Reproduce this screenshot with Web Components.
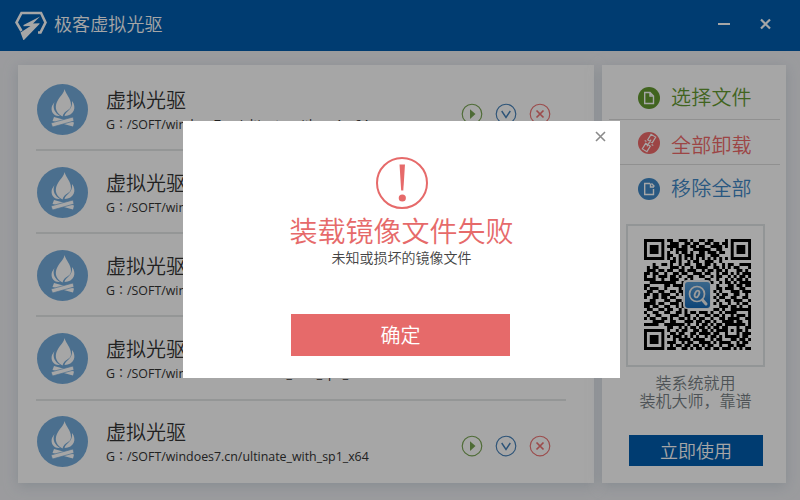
<!DOCTYPE html>
<html lang="zh-CN"><head><meta charset="utf-8"><title>极客虚拟光驱</title>
<style>
html,body{margin:0;height:100%;overflow:hidden}
body{width:800px;height:500px;font-family:"Noto Sans CJK SC",sans-serif;font-weight:350}
</style></head><body>
<drive-app></drive-app>
<script>
const define=(name,html,setup)=>customElements.define(name,class extends HTMLElement{
  constructor(){super();this.attachShadow({mode:'open'})}
  connectedCallback(){this.shadowRoot.innerHTML=html;if(setup)setup(this,this.shadowRoot)}
});

define('title-bar',`<style>
:host{display:flex;box-sizing:border-box;height:51px;padding:0 28px 4px 14px;background:#005cae;color:#fff;align-items:center}
.name{font-size:18px;line-height:24px;margin:-2px 0 0 7px;flex:1;letter-spacing:.1px}
svg{display:block}
</style>
<svg width="33" height="33" viewBox="0 0 33 33"><path d="M7.500 24 2.500 15.500 7.500 6H27L31.500 15.500 26.500 25.500H24" fill="none" stroke="#fff" stroke-width="2.600"/><path d="M26 9.500 9.500 18V19.200L16.500 19 6.500 25.500 9.500 33.500 25.500 17V16.300L19 16.500Z" fill="#fff"/></svg>
<span class="name"><slot></slot></span>
<svg width="54" height="14" viewBox="0 0 54 14"><path d="M0 7H12" stroke="#fff" stroke-width="2"/><path d="M43 2.500 52 11.500M52 2.500 43 11.500" stroke="#fff" stroke-width="2.200"/></svg>`);

define('fire-icon',`<style>:host{display:block;width:51px;height:51px;flex:none}svg{display:block}</style>
<svg width="51" height="51" viewBox="0 0 51 51"><circle cx="25.500" cy="25.500" r="25.500" fill="#74abda"/>
<g fill="#fff"><path d="M27.500 5C29 11 34 14 34 21C34 27 27 26 25.500 32.500C17 28 18 21 21 16C24 11 27 9 27.500 5Z"/>
<path d="M17.500 18C15 24 18 29 23 32C16 32.500 13.500 27 15 22Z"/><path d="M35 17C40 23 37 32 27.500 32C28.500 27 36 26 35 17Z"/>
<path d="M17 33 37 38.500 36 42.500 15.500 37Z"/><path d="M36 33 37 37 15.500 43 14 39Z" stroke="#74abda" stroke-width=".7"/></g></svg>`);

define('row-actions',`<style>:host{display:flex;gap:12px}svg{display:block;width:22px;height:22px;fill:none;stroke-width:1.150}</style>
<svg viewBox="0 0 22 22" stroke="#79a553"><circle cx="11" cy="11" r="9.800"/><path d="M9 6.300V16L14.500 11Z" fill="#79a553" stroke="none"/></svg>
<svg viewBox="0 0 22 22" stroke="#4580b8"><circle cx="11" cy="11" r="9.800"/><path d="M6.700 8 11 14.500 15.300 8" stroke-width="1.400"/></svg>
<svg viewBox="0 0 22 22" stroke="#ee7474"><circle cx="11" cy="11" r="9.800"/><path d="M7.500 7.500 14.500 14.500M14.500 7.500 7.500 14.500" stroke-width="1.700"/></svg>`);

define('drive-row',`<style>
:host{display:flex;box-sizing:border-box;height:83px;padding:1px 15px 0 1px;border-bottom:2px solid #e4e6e7;align-items:center}
:host(:nth-of-type(4)){height:84px;padding-bottom:1px}
:host(:last-of-type){border:0;height:81px;padding:0 15px 1px 1px}
.text{flex:1;margin-left:18px;padding-top:2px;color:#333;white-space:nowrap}
.t{font-size:20px;line-height:28px}
.p{font:400 12.400px/20px "Open Sans","Noto Sans CJK TC",sans-serif;color:#333}
.c{font-family:"Noto Sans CJK TC",sans-serif;font-size:12px}
row-actions{margin-top:9px}
</style><fire-icon></fire-icon><div class="text"><div class="t"><slot></slot></div><div class="p">G<span class="c" lang="zh-TW">：</span>/SOFT/windoes7.cn/ultinate_with_sp1_x64</div></div><row-actions></row-actions>`);

define('side-action',`<style>
:host{display:flex;box-sizing:border-box;align-items:center;height:45px;padding-left:29px;gap:11px;font-size:20px;line-height:28px;letter-spacing:.2px}
svg{display:block;flex:none}
:host([kind=open]){color:#649a30}:host([kind=eject]){color:#f06a6a}:host([kind=remove]){color:#3f88c6}
:host([kind=open]) span{margin-top:-1px}:host([kind=eject]) span{padding-top:4px}:host([kind=remove]) span{margin-top:-3px}
</style><svg width="22" height="22" viewBox="0 0 22 22"></svg><span><slot></slot></span>`,(el,root)=>{
 const paths={
  open:['#649a30','<path d="M6.700 5.500H12L15.500 9V16.500H6.700Z M12 5.500V9H15.500"/>'],
  eject:['#f06a6a','<g transform="rotate(31 11 11)" stroke-width="1.200"><path d="M8.300 9V2.500H13.700V9ZM8.300 13V19.500H13.700V13ZM11 7V15M6 11H8M14 11H16"/></g>'],
  remove:['#3f88c6','<path d="M12 5.500H6.700V16.500H15.500V11M12.500 5.500V9H16M13.500 5.500 16.500 8.500"/>']};
 const [c,p]=paths[el.getAttribute('kind')];
 root.querySelector('svg').innerHTML='<circle cx="11" cy="11" r="11" fill="'+c+'"/><g fill="none" stroke="#fff" stroke-width="1.400">'+p+'</g>';
});

const CODE=[
'1111111011001110100110110000111011111',
'1000001001110011011001101101111010000',
'1011101011110110110110011110111010111',
'1011101001011110011111100110011010111',
'1011101010010110100110111011011010111',
'1000001011001011101110011100010010000',
'1111111010101010101010101010101011111',
'0000000001101001011001110010011000000',
'0001001101001011001101101001011001111',
'0101100001110100101111001101010110001',
'0111011011001101110010110110100011010',
'1101100100110110011101100101101010111',
'1001011101101001100110010110010101101',
'1111001001110010100001100100101011010',
'0011111111100100110100110010110101111',
'1100000110111111000000000100011011011',
'1011100100001000000000000110111001100',
'0110011001101100000000001010001110111',
'1101101110010110000000000101100110010',
'1001101101100010000000001011001100110',
'0011000110011010000000000100110111001',
'1111011001110100000000001010010010110',
'1101100110010110000000000011101101001',
'0110011011001010000000001101001111111',
'1001100110011010110111010010111100001',
'0100110001110011001001101101001011101',
'1011001101001101010110010011011110011',
'0001111001100011101101101001111011001',
'1111100111111101001011010110111111101',
'0000000011001010110110101101100010011',
'1111111010010110011011010111101011010',
'1000001001101100110111101100100010111',
'1011101010111010101001011010111110110',
'1011101000101111011110010110001101101',
'1011101011100101100111101011110010110',
'1000001001011011011010110010011011100',
'1111111011100110101101101101110101011'];
define('qr-card',`<style>:host{display:flex;box-sizing:border-box;width:139px;height:143px;padding:0 0 2px 4px;border:2px solid #e0e5e6;justify-content:center;align-items:center}svg{display:block}</style>
<svg width="107" height="111" viewBox="0 0 107 111"></svg>`,(el,root)=>{
 let d='';
 const finder=(r,c)=>{const a=r<7?r:r-30,b=c<7?c:c-30;return a==0||a==6||b==0||b==6||(a>1&&a<5&&b>1&&b<5)};
 for(let r=0;r<37;r++)for(let c=0;c<37;c++){
  const inF=(r<7&&(c<7||c>29))||(r>29&&c<7), quiet=(r<8&&(c<8||c>28))||(r>28&&c<8);
  if(inF?finder(r,c):!quiet&&CODE[r][c]=='1')d+='M'+c+' '+r+'h1.02v1.02h-1.02z';
 }
 root.querySelector('svg').innerHTML='<path transform="scale(2.892 3)" d="'+d+'" fill="#000"/><rect x="39" y="41" width="28" height="29" rx="4" fill="#eef1f4"/><defs><linearGradient id="g" x2="0" y2="1"><stop stop-color="#5b9fd6"/><stop offset="1" stop-color="#176ab8"/></linearGradient></defs><rect x="41" y="43" width="25" height="26" rx="3" fill="url(#g)"/><circle cx="53" cy="55" r="7.500" fill="none" stroke="#eee" stroke-width="1.700"/><path d="M58.500 61 62 65" stroke="#eee" stroke-width="3" stroke-linecap="round"/><ellipse cx="53" cy="55" rx="2" ry="3.500" transform="rotate(24 53 55)" fill="none" stroke="#eee" stroke-width="1.800"/>';
});

define('side-panel',`<style>
:host{display:flex;box-sizing:border-box;flex-direction:column;width:184px;padding:10px 6px 0 7px;background:#fff;box-shadow:0 3px 12px #b9c6d099}
.menu{display:flex;flex-direction:column}
hr{margin:0;border:0;height:1px;background:#dedede}
qr-card{margin:14px 0 0 17px}
.note{font-size:16px;line-height:18px;text-align:center;color:#777f84;margin-top:6px;padding-left:2px}
.go{display:flex;align-items:center;justify-content:center;box-sizing:border-box;width:134px;height:31px;padding-bottom:1px;margin:26px 0 0 20px;background:#005cae;color:#fff;font-size:18px}
</style><div class="menu"><side-action kind="open" style="height:44px;padding-top:1px">选择文件</side-action><hr><side-action kind="eject" style="height:44px;padding-top:2px">全部卸载</side-action><hr><side-action kind="remove" style="height:45px;padding-top:3px">移除全部</side-action></div>
<qr-card></qr-card><div class="note">装系统就用<br>装机大师，靠谱</div><div class="go">立即使用</div>`);

define('error-dialog',`<style>
:host{display:flex;box-sizing:border-box;position:relative;flex-direction:column;align-items:center;width:437px;height:257px;background:#fff;padding-top:36px}
svg{display:block}.x{position:absolute;right:14px;top:10px}
.t{font-size:28px;line-height:36px;color:#e66a6a;margin-top:3px}
.s{font-size:14px;line-height:20px;color:#444;margin-top:-1px}
.b{display:flex;align-items:center;justify-content:center;box-sizing:border-box;width:219px;height:42px;padding-bottom:1px;margin:47px 2px 0 0;background:#e66a6a;color:#fff;font-size:20px}
</style><svg class="x" width="11" height="11" viewBox="0 0 11 11"><path d="M1 1 10 10M10 1 1 10" stroke="#8b8b8b" stroke-width="1.600"/></svg>
<svg width="52" height="52" viewBox="0 0 52 52"><circle cx="26" cy="26" r="25" fill="none" stroke="#e66a6a" stroke-width="2"/><path d="M23.500 7.500H29L27.300 33.500H25.200Z" fill="#e66a6a"/><circle cx="26.300" cy="41" r="3.600" fill="#e66a6a"/></svg>
<div class="t"><slot></slot></div><div class="s">未知或损坏的镜像文件</div><div class="b">确定</div>`);

define('drive-app',`<style>
:host{display:block;position:relative;width:800px;height:500px;background:#eeeff3;overflow:hidden}
main{display:flex;gap:8px;padding:14px 14px 17px 18px;height:418px}
.list{box-sizing:border-box;width:576px;padding:3px 28px 0 18px;background:#fff;box-shadow:0 3px 12px #b9c6d099}
.overlay{position:absolute;inset:0;background:rgba(0,0,0,.35);box-sizing:border-box;padding:121px 0 0 183px}
</style><title-bar>极客虚拟光驱</title-bar><main><div class="list">${'<drive-row>虚拟光驱</drive-row>'.repeat(5)}</div><side-panel></side-panel></main>
<div class="overlay"><error-dialog>装载镜像文件失败</error-dialog></div>`);
</script></body></html>
